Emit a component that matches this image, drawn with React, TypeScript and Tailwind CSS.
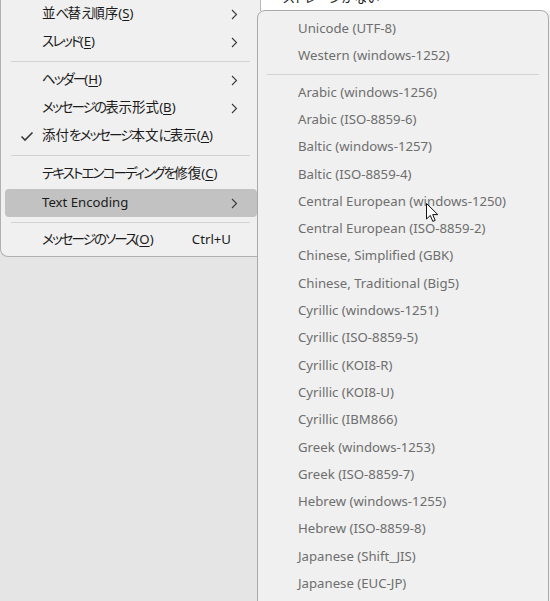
import React from "react";

const Chevron = () => (
  <svg width="7" height="11" viewBox="0 0 7 11" className="shrink-0">
    <path d="M1 1 L5.5 5.5 L1 10" fill="none" stroke="#3a3a3a" strokeWidth="1.1" />
  </svg>
);

const Check = () => (
  <svg width="14" height="11" viewBox="0 0 14 11">
    <path d="M1.5 5.5 L5 9 L12.5 1.5" fill="none" stroke="#3a3a3a" strokeWidth="1.6" />
  </svg>
);

const isKana = (c: string) => /[\u3040-\u30ff]/.test(c);

// Splits Japanese text into kana / other runs so kana can be set tighter (like Yu Gothic UI)
const JP = ({ text, k }: { text: string; k?: string }) => {
  const runs: { kana: boolean; s: string }[] = [];
  for (const ch of text) {
    const kana = isKana(ch);
    const last = runs[runs.length - 1];
    if (last && last.kana === kana) last.s += ch;
    else runs.push({ kana, s: ch });
  }
  return (
    <span className="text-[13.5px] [font-feature-settings:'palt']">
      {runs.map((r, i) => (
        <span key={i} className={r.kana ? "tracking-[-1.9px]" : ""}>
          {r.s}
        </span>
      ))}
      <span className="text-[13.2px]">
        (<u className="underline-offset-2">{k}</u>)
      </span>
    </span>
  );
};

type LeftItem =
  | { sep: number }
  | { label: React.ReactNode; arrow?: boolean; check?: boolean; active?: boolean; shortcut?: string };

const leftItems: LeftItem[] = [
  { label: <JP text="並べ替え順序" k="S" />, arrow: true },
  { label: <JP text="スレッド" k="E" />, arrow: true },
  { sep: 10 },
  { label: <JP text="ヘッダー" k="H" />, arrow: true },
  { label: <JP text="メッセージの表示形式" k="B" />, arrow: true },
  { label: <JP text="添付をメッセージ本文に表示" k="A" />, check: true },
  { sep: 10 },
  { label: <JP text="テキストエンコーディングを修復" k="C" /> },
  { label: <span>Text Encoding</span>, arrow: true, active: true },
  { sep: 8 },
  { label: <JP text="メッセージのソース" k="O" />, shortcut: "Ctrl+U" },
];

const subItems: (string | null)[] = [
  "Unicode (UTF-8)",
  "Western (windows-1252)",
  null,
  "Arabic (windows-1256)",
  "Arabic (ISO-8859-6)",
  "Baltic (windows-1257)",
  "Baltic (ISO-8859-4)",
  "Central European (windows-1250)",
  "Central European (ISO-8859-2)",
  "Chinese, Simplified (GBK)",
  "Chinese, Traditional (Big5)",
  "Cyrillic (windows-1251)",
  "Cyrillic (ISO-8859-5)",
  "Cyrillic (KOI8-R)",
  "Cyrillic (KOI8-U)",
  "Cyrillic (IBM866)",
  "Greek (windows-1253)",
  "Greek (ISO-8859-7)",
  "Hebrew (windows-1255)",
  "Hebrew (ISO-8859-8)",
  "Japanese (Shift_JIS)",
  "Japanese (EUC-JP)",
];

export default function App() {
  return (
    <div
      className="relative w-[550px] h-[601px] overflow-hidden bg-[#e5e5e5] text-[13.2px] text-[#1b1b1b]"
      style={{ fontFamily: "'Noto Sans', 'Noto Sans CJK JP', sans-serif" }}
    >
      {/* background pane on the right */}
      <div className="absolute left-[257px] top-0 right-0 bottom-0 flex flex-col border-l border-[#a3a3a3] bg-[#f0f0f0]">
        <div className="h-[11px] ml-[2px] bg-white border-l border-[#b8b8b8] overflow-hidden">
          <div className="pl-[22px] -mt-[12px] text-[#222] text-[13px] [font-feature-settings:'palt']">
            ストレージがない
          </div>
        </div>
      </div>

      {/* left menu */}
      <div className="absolute left-0 top-[-10px] w-[258px] pt-[10px] pb-[2px] bg-[#f0f0f0] border-l border-b border-[#b0b0b0] rounded-bl-[8px] flex flex-col pl-[4px] pr-[1px]">
        {leftItems.map((it, i) =>
          "sep" in it ? (
            <div
              key={i}
              className={`flex items-center pl-[6px] pr-[7px] ${it.sep === 10 ? "h-[10px]" : "h-[8px]"}`}
            >
              <div className="h-px w-full bg-[#d2d2d2]" />
            </div>
          ) : (
            <div
              key={i}
              className={`h-[28px] flex items-center rounded-[4px] ${it.active ? "bg-[#c2c2c2] h-[26px] my-[1px]" : ""}`}
            >
              <div className="w-[37px] flex justify-center pl-[6px]">{it.check && <Check />}</div>
              <div className="flex-1 leading-none whitespace-nowrap">{it.label}</div>
              {it.shortcut && <div className="mr-[26px]">{it.shortcut}</div>}
              {it.arrow && (
                <div className="w-[27px] flex justify-start pl-[1px]">
                  <Chevron />
                </div>
              )}
            </div>
          )
        )}
      </div>

      {/* submenu */}
      <div className="absolute left-[257px] top-[10px] w-[292px] h-[620px] bg-[#f0f0f0] border border-[#a9a9a9] rounded-t-[8px] pt-[4px] px-[9px] flex flex-col text-[#6e6e6e]">
        {subItems.map((s, i) =>
          s === null ? (
            <div key={i} className="h-[9px] shrink-0 flex items-center">
              <div className="h-px w-full bg-[#d2d2d2]" />
            </div>
          ) : (
            <div key={i} className="h-[27.3px] shrink-0 flex items-center pl-[31px] leading-none whitespace-nowrap">
              {s}
            </div>
          )
        )}
      </div>

      {/* mouse cursor */}
      <svg className="absolute left-[426px] top-[203px]" width="13" height="20" viewBox="0 0 13 20">
        <path
          d="M0.5 0.5 L0.5 16 L4.3 12.4 L6.8 18.4 L9.2 17.4 L6.7 11.6 L11.8 11.6 Z"
          fill="white"
          stroke="#111"
          strokeWidth="1"
          strokeLinejoin="round"
        />
      </svg>
    </div>
  );
}
